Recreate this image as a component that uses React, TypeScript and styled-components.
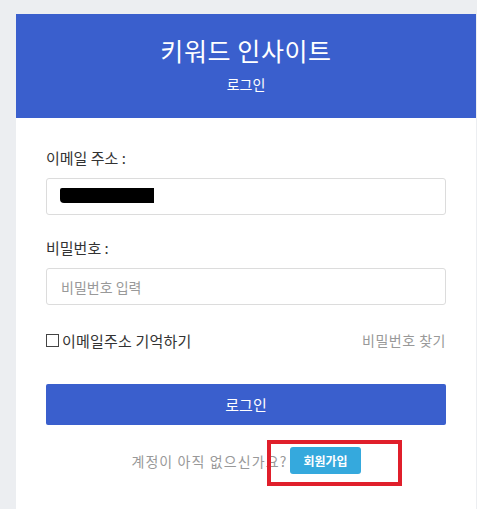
import React from 'react';
import styled, { createGlobalStyle } from 'styled-components';

const GlobalStyle = createGlobalStyle`
  html, body {
    margin: 0;
    padding: 0;
    background: #eceef1;
  }
  body {
    font-family: "Noto Sans CJK KR", "Noto Sans", sans-serif;
    color: #333;
  }
`;

const Page = styled.div`
  height: 509px;
  overflow: hidden;
  padding: 14px 1px 0 16px;
  box-sizing: border-box;
`;

const Card = styled.div`
  background: #fff;
  height: 100%;
`;

const Header = styled.header`
  background: #3a5fcd;
  color: #fff;
  height: 104px;
  display: flex;
  flex-direction: column;
  align-items: center;
  box-sizing: border-box;
  padding-top: 19px;
`;

const Title = styled.h1`
  margin: 0;
  font-size: 25px;
  font-weight: 400;
  line-height: 34px;
  letter-spacing: 0.6px;
`;

const Subtitle = styled.div`
  margin-top: 8px;
  font-size: 14px;
  line-height: 18px;
`;

const Body = styled.div`
  padding: 30px 30px 0 30px;
  display: flex;
  flex-direction: column;
`;

const Label = styled.label`
  font-size: 15px;
  line-height: 20px;
  color: #333;
  margin-bottom: 10px;
`;

const Field = styled.div<{ $gap: number }>`
  position: relative;
  margin-bottom: ${(p) => p.$gap}px;
`;

const Input = styled.input`
  display: block;
  width: 100%;
  box-sizing: border-box;
  height: 37px;
  border: 1px solid #dcdcdc;
  border-radius: 3px;
  padding: 0 14px;
  font-family: inherit;
  font-size: 14px;
  color: #555;
  outline: none;
  &::placeholder {
    color: #999;
  }
`;

const Redaction = styled.span`
  position: absolute;
  left: 14px;
  top: 10px;
  width: 94px;
  height: 15px;
  background: #000;
  border-radius: 2px 0 0 4px;
`;

const OptionsRow = styled.div`
  display: flex;
  justify-content: space-between;
  align-items: center;
  margin-top: 25px;
  height: 20px;
`;

const Remember = styled.label`
  display: flex;
  align-items: center;
  font-size: 15px;
  color: #333;
  gap: 3px;
  letter-spacing: 0.2px;
`;

const Box = styled.span`
  width: 11px;
  height: 11px;
  border: 1px solid #444;
  display: inline-block;
`;

const FindLink = styled.a`
  font-size: 14px;
  color: #999;
  letter-spacing: 0.5px;
  text-decoration: none;
`;

const SubmitButton = styled.button`
  margin-top: 34px;
  height: 41px;
  width: 100%;
  border: none;
  border-radius: 2px;
  background: #3a5fcd;
  color: #fff;
  font-family: inherit;
  font-size: 15px;
`;

const SignupRow = styled.div`
  margin-top: 22px;
  display: flex;
  justify-content: center;
  align-items: center;
  gap: 3px;
  font-size: 14px;
  color: #999;
`;

const Question = styled.span`
  letter-spacing: 1.1px;
`;

const SignupBadge = styled.a`
  position: relative;
  background: #35a9dd;
  color: #fff;
  font-size: 12px;
  font-weight: 700;
  border-radius: 3px;
  padding: 0 13px;
  height: 27px;
  line-height: 27px;
  text-decoration: none;
`;

const Highlight = styled.span`
  position: absolute;
  left: -23px;
  top: -7px;
  width: 135px;
  height: 46px;
  border: 4px solid #e01f2b;
  box-sizing: border-box;
  pointer-events: none;
`;

export default function App() {
  return (
    <>
      <GlobalStyle />
      <Page>
        <Card>
          <Header>
            <Title>키워드 인사이트</Title>
            <Subtitle>로그인</Subtitle>
          </Header>
          <Body>
            <Label>이메일 주소 :</Label>
            <Field $gap={23}>
              <Input type="email" readOnly />
              <Redaction />
            </Field>
            <Label>비밀번호 :</Label>
            <Field $gap={0}>
              <Input type="password" placeholder="비밀번호 입력" />
            </Field>
            <OptionsRow>
              <Remember>
                <Box />
                이메일주소 기억하기
              </Remember>
              <FindLink href="#">비밀번호 찾기</FindLink>
            </OptionsRow>
            <SubmitButton>로그인</SubmitButton>
            <SignupRow>
              <Question>계정이 아직 없으신가요?</Question>
              <SignupBadge href="#">
                회원가입
                <Highlight />
              </SignupBadge>
            </SignupRow>
          </Body>
        </Card>
      </Page>
    </>
  );
}
